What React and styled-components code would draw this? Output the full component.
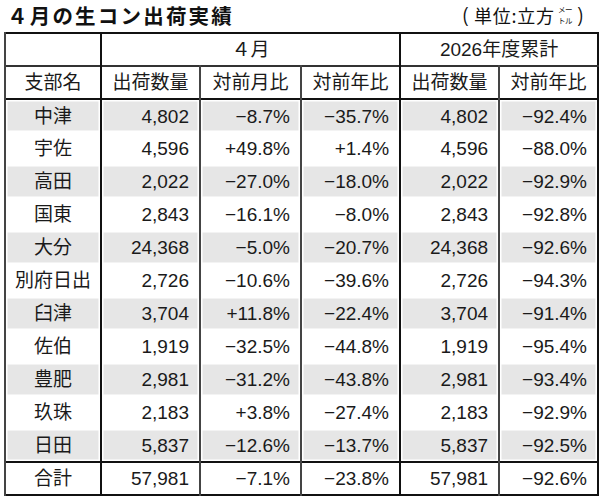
import React from 'react';
import styled, { createGlobalStyle } from 'styled-components';

const Global = createGlobalStyle`
  html, body { margin: 0; padding: 0; background: #fff; }
  body {
    font-family: "Noto Sans CJK JP", "Noto Sans", sans-serif;
    color: #1a1a1a;
    text-spacing-trim: space-all;
  }
`;

const Page = styled.div`
  width: 600px;
  height: 497px;
  box-sizing: border-box;
  padding: 0 2px 0 4px;
  overflow: hidden;
`;

const TitleBar = styled.div`
  display: flex;
  justify-content: space-between;
  align-items: center;
  height: 32px;
  padding: 0 11px 2px 3px;
  box-sizing: border-box;
`;

const Title = styled.h1`
  margin: 0;
  font-size: 20.5px;
  font-weight: 700;
  letter-spacing: 2.2px;
  line-height: 1;
  color: #111;
  white-space: nowrap;
`;

const Unit = styled.div`
  display: flex;
  align-items: center;
  gap: 2px;
  flex-shrink: 0;
  white-space: nowrap;
  font-size: 18px;
  font-weight: 400;
  line-height: 1;
  color: #111;
`;

const UnitText = styled.span`
  letter-spacing: 0.8px;
`;

const Paren = styled.span`
  font-family: "Liberation Sans", sans-serif;
  font-size: 20px;
  line-height: 1;
  padding: 0 3px;
  transform: scaleX(0.8);
`;

const Meter = styled.span`
  display: inline-flex;
  flex-direction: column;
  align-items: center;
  font-size: 7.5px;
  line-height: 11px;
  letter-spacing: -0.3px;
  margin-left: 1px;
`;

const Table = styled.table`
  width: 593px;
  border-collapse: collapse;
  table-layout: fixed;
  border: 2px solid #111;
  font-family: "Liberation Sans", "Noto Sans CJK JP", sans-serif;
  font-size: 19px;
  font-weight: 400;
  line-height: 1;
  color: #1a1a1a;
`;

const Row = styled.tr`
  height: 33px;
  border-top: ${p => (p.$strongTop ? '2px' : '0')} solid #111;
`;

const HeadRow = styled.tr`
  height: 33px;
  border-bottom: 2px solid ${p => p.$line};
`;

const Head = styled.th`
  font-weight: 400;
  text-align: center;
  padding: 0;
  border-left: 2px solid ${p => (p.$thick ? '#111' : '#444')};
  white-space: nowrap;
`;

const Cell = styled.td`
  padding: ${p => (p.$center ? '0' : '0 10px 0 0')};
  text-align: ${p => (p.$center ? 'center' : 'right')};
  background: ${p => (p.$shade ? '#e6e6e6' : '#fff')};
  box-shadow: ${p => (p.$shade ? 'inset 0 0 0 1.5px #fff' : 'none')};
  border-left: 2px solid ${p => (p.$thick ? '#111' : '#444')};
  white-space: nowrap;
`;

const rows = [
  ['中津', '4,802', '−8.7%', '−35.7%', '4,802', '−92.4%'],
  ['宇佐', '4,596', '+49.8%', '+1.4%', '4,596', '−88.0%'],
  ['高田', '2,022', '−27.0%', '−18.0%', '2,022', '−92.9%'],
  ['国東', '2,843', '−16.1%', '−8.0%', '2,843', '−92.8%'],
  ['大分', '24,368', '−5.0%', '−20.7%', '24,368', '−92.6%'],
  ['別府日出', '2,726', '−10.6%', '−39.6%', '2,726', '−94.3%'],
  ['臼津', '3,704', '+11.8%', '−22.4%', '3,704', '−91.4%'],
  ['佐伯', '1,919', '−32.5%', '−44.8%', '1,919', '−95.4%'],
  ['豊肥', '2,981', '−31.2%', '−43.8%', '2,981', '−93.4%'],
  ['玖珠', '2,183', '+3.8%', '−27.4%', '2,183', '−92.9%'],
  ['日田', '5,837', '−12.6%', '−13.7%', '5,837', '−92.5%'],
];
const total = ['合計', '57,981', '−7.1%', '−23.8%', '57,981', '−92.6%'];

const thickCols = [false, true, false, false, true, false];

function DataRow({ data, shade, strongTop }) {
  return (
    <Row $strongTop={strongTop}>
      {data.map((v, i) => (
        <Cell key={i} $center={i === 0} $shade={shade} $thick={thickCols[i]}>
          {v}
        </Cell>
      ))}
    </Row>
  );
}

export default function App() {
  return (
    <Page>
      <Global />
      <TitleBar>
        <Title>４月の生コン出荷実績</Title>
        <Unit>
          <Paren>(</Paren>
          <UnitText>単位:立方</UnitText>
          <Meter>
            <span>メー</span>
            <span>トル</span>
          </Meter>
          <Paren>)</Paren>
        </Unit>
      </TitleBar>
      <Table>
        <colgroup>
          <col style={{ width: 96 }} />
          <col style={{ width: 99 }} />
          <col style={{ width: 101 }} />
          <col style={{ width: 99 }} />
          <col style={{ width: 99 }} />
          <col style={{ width: 99 }} />
        </colgroup>
        <thead>
          <HeadRow $line="#333">
            <Head />
            <Head colSpan={3} $thick>４月</Head>
            <Head colSpan={2} $thick>2026年度累計</Head>
          </HeadRow>
          <HeadRow $line="#111">
            <Head>支部名</Head>
            <Head $thick>出荷数量</Head>
            <Head>対前月比</Head>
            <Head>対前年比</Head>
            <Head $thick>出荷数量</Head>
            <Head>対前年比</Head>
          </HeadRow>
        </thead>
        <tbody>
          {rows.map((r, i) => (
            <DataRow key={r[0]} data={r} shade={i % 2 === 0} />
          ))}
          <DataRow data={total} strongTop />
        </tbody>
      </Table>
    </Page>
  );
}
